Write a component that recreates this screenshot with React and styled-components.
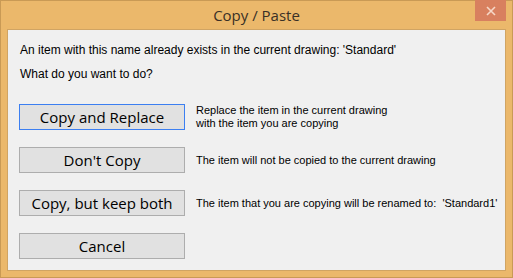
import React from "react";
import styled, { createGlobalStyle } from "styled-components";

const GlobalStyle = createGlobalStyle`
  html, body {
    margin: 0;
    padding: 0;
    background: #ffffff;
  }
`;

const options = [
  {
    label: "Copy and Replace",
    text: ["Replace the item in the current drawing", "with the item you are copying"],
    focused: true,
  },
  {
    label: "Don't Copy",
    text: ["The item will not be copied to the current drawing"],
  },
  {
    label: "Copy, but keep both",
    text: ["The item that you are copying will be renamed to:  'Standard1'"],
  },
  { label: "Cancel", text: [] },
];

export default function App() {
  return (
    <>
      <GlobalStyle />
      <Window>
        <TitleBar>
          <Title>Copy / Paste</Title>
          <CloseButton>
            <svg width="10" height="10" viewBox="0 0 10 10">
              <path d="M1 1 L9 9 M9 1 L1 9" stroke="#f6d8c8" strokeWidth="1.6" />
            </svg>
          </CloseButton>
        </TitleBar>
        <Client>
          <Message>An item with this name already exists in the current drawing: 'Standard'</Message>
          <Message>What do you want to do?</Message>
          <Options>
            {options.map((o) => (
              <OptionRow key={o.label}>
                <Button focused={o.focused}>{o.label}</Button>
                <Description>
                  {o.text.map((t) => (
                    <div key={t}>{t}</div>
                  ))}
                </Description>
              </OptionRow>
            ))}
          </Options>
        </Client>
      </Window>
    </>
  );
}

const Window = styled.div`
  width: 513px;
  height: 278px;
  box-sizing: border-box;
  background: #ebb86b;
  border: 1px solid #c99a55;
  display: flex;
  flex-direction: column;
  padding: 0 6px 6px 6px;
`;

const TitleBar = styled.div`
  height: 28px;
  position: relative;
  display: flex;
  align-items: center;
  justify-content: center;
`;

const Title = styled.div`
  font-family: "Open Sans", "Noto Sans", sans-serif;
  font-size: 15px;
  color: #3a3026;
  margin-top: 0px;
`;

const CloseButton = styled.div`
  position: absolute;
  top: -1px;
  right: 0px;
  width: 31px;
  height: 21px;
  background: #d8805f;
  display: flex;
  align-items: center;
  justify-content: center;
`;

const Client = styled.div`
  flex: 1;
  background: #f0f0f0;
  border: 1px solid #d0a463;
  padding: 13px 0 0 11px;
  color: #000;
`;

const Message = styled.div`
  font-family: Tahoma, "Liberation Sans", sans-serif;
  font-size: 12px;
  line-height: 14px;
  padding-left: 1px;
  margin-bottom: 10px;
`;

const Options = styled.div`
  margin-top: 23px;
  display: flex;
  flex-direction: column;
  gap: 17px;
`;

const OptionRow = styled.div`
  display: flex;
  align-items: center;
  gap: 11px;
`;

const Button = styled.div`
  width: 166px;
  height: 26px;
  box-sizing: border-box;
  background: #e1e1e1;
  border: 1px solid ${({ focused }) => (focused ? "#3c7ff1" : "#adadad")};
  display: flex;
  align-items: center;
  justify-content: center;
  font-family: "Open Sans", "Noto Sans", sans-serif;
  font-size: 15px;
  color: #000;
  flex-shrink: 0;
`;

const Description = styled.div`
  font-family: Tahoma, "Liberation Sans", sans-serif;
  font-size: 11px;
  line-height: 13px;
  color: #000;
  white-space: pre;
`;
